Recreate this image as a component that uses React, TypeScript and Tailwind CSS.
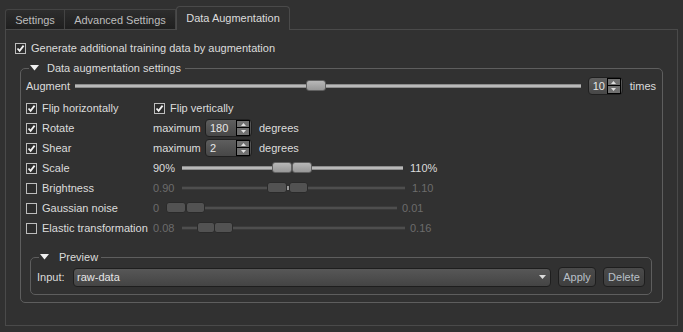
import React from 'react';

const Check: React.FC<{ on?: boolean }> = ({ on }) => (
    <span className="w-[11px] h-[11px] border border-[#bdbdbd] bg-[#2c2c2c] flex items-center justify-center shrink-0">
        {on && (
            <svg width="9" height="9" viewBox="0 0 9 9">
                <path d="M1.5 4.5 L3.6 6.8 L7.6 1.6" fill="none" stroke="#f2f2f2" strokeWidth="1.8" />
            </svg>
        )}
    </span>
);

const Arrow: React.FC = () => (
    <svg width="9" height="6" viewBox="0 0 9 6" className="shrink-0">
        <polygon points="0,0 9,0 4.5,5.5" fill="#f0f0f0" />
    </svg>
);

const Spin: React.FC<{ value: string; w: string }> = ({ value, w }) => (
    <div className={`${w} h-[18px] rounded-[4px] border border-[#202020] bg-gradient-to-b from-[#5e5e5e] to-[#474747] flex items-center justify-between pl-[4px] pr-[1px]`}>
        <span className="text-[#e6e6e6]">{value}</span>
        <div className="flex flex-col w-[14px]">
            <span className="h-[8px] border border-black bg-[#707070] flex items-center justify-center">
                <svg width="5" height="3" viewBox="0 0 5 3"><polygon points="0,3 5,3 2.5,0" fill="#e0e0e0" /></svg>
            </span>
            <span className="h-[8px] border border-black border-t-0 bg-[#707070] flex items-center justify-center">
                <svg width="5" height="3" viewBox="0 0 5 3"><polygon points="0,0 5,0 2.5,3" fill="#e0e0e0" /></svg>
            </span>
        </div>
    </div>
);

// groove with one or two handles laid over it
const Groove: React.FC<{ w: string; on?: boolean; handles: { left: number; w: number }[]; gap?: number }> = ({ w, on, handles, gap }) => (
    <div className={`relative ${w} h-[4px] ${on ? 'bg-[#b9b9b9] border-y border-[#8c8c8c]' : 'bg-[#4e4e4e] border-y border-[#3a3a3a]'}`}>
        {gap !== undefined && <span className="absolute top-[-1px] h-[4px] w-[3px] bg-[#9a9a9a]" style={{ left: gap }} />}
        {handles.map((h, i) => (
            <span
                key={i}
                className={`absolute top-[-5px] h-[11px] rounded-[3px] border ${on ? 'border-[#606060] bg-gradient-to-b from-[#b8b8b8] to-[#979797]' : 'border-[#2a2a2a] bg-[#525252]'}`}
                style={{ left: h.left, width: h.w }}
            />
        ))}
    </div>
);

export default function App() {
    return (
        <div className="w-[683px] h-[332px] overflow-hidden bg-[#313131] text-[11px] leading-[14px] text-[#dcdcdc] font-['Liberation_Sans',Arial,sans-serif]">
            {/* Tabs */}
            <div className="flex items-end h-[29px] px-[5px]">
                <div className="w-[60px] h-[20px] border border-[#444] border-b-0 rounded-tl-[3px] bg-gradient-to-b from-[#2d2d2d] to-[#1f1f1f] text-[#bdbdbd] flex items-center justify-center">
                    Settings
                </div>
                <div className="w-[111px] h-[20px] border border-l-0 border-[#444] border-b-0 bg-gradient-to-b from-[#2d2d2d] to-[#1f1f1f] text-[#bdbdbd] flex items-center justify-center">
                    Advanced Settings
                </div>
                <div className="w-[114px] h-[24px] -mb-px border border-b-0 border-[#4a4a4a] rounded-t-[4px] bg-[#313131] flex items-center justify-center pb-[2px] relative z-10">
                    Data Augmentation
                </div>
            </div>

            {/* Panel */}
            <div className="mx-[5px] h-[297px] border border-[#4a4a4a]">
                <div className="flex items-center gap-[5px] pl-[9px] mt-[11px] h-[14px]">
                    <Check on />
                    <span>Generate additional training data by augmentation</span>
                </div>

                <fieldset className="mx-[14px] mt-[6px] border border-[#5e5e5e] rounded-[5px] px-[5px] pb-[7px]">
                    <legend className="ml-[3px] px-[1px] flex items-center gap-[8px] leading-[14px]">
                        <Arrow />
                        <span className="pr-[3px]">Data augmentation settings</span>
                    </legend>

                    <div className="flex items-center h-[20px] mt-[1px]">
                        <span className="w-[49px]">Augment</span>
                        <Groove w="flex-1" on handles={[{ left: 231, w: 20 }]} />
                        <div className="ml-[7px]"><Spin value="10" w="w-[35px]" /></div>
                        <span className="ml-[7px] mr-[1px]">times</span>
                    </div>

                    <div className="grid grid-cols-[127px_1fr] auto-rows-[20px] mt-[2px]">
                        <div className="flex items-center gap-[5px]"><Check on /><span>Flip horizontally</span></div>
                        <div className="flex items-center gap-[5px] pl-[1px]"><Check on /><span>Flip vertically</span></div>

                        <div className="flex items-center gap-[5px]"><Check on /><span>Rotate</span></div>
                        <div className="flex items-center">
                            <span className="w-[52px]">maximum</span>
                            <Spin value="180" w="w-[47px]" />
                            <span className="ml-[7px]">degrees</span>
                        </div>

                        <div className="flex items-center gap-[5px]"><Check on /><span>Shear</span></div>
                        <div className="flex items-center">
                            <span className="w-[52px]">maximum</span>
                            <Spin value="2" w="w-[47px]" />
                            <span className="ml-[7px]">degrees</span>
                        </div>

                        <div className="flex items-center gap-[5px]"><Check on /><span>Scale</span></div>
                        <div className="flex items-center">
                            <span className="w-[29px]">90%</span>
                            <Groove w="w-[221px]" on handles={[{ left: 90, w: 20 }, { left: 110, w: 20 }]} />
                            <span className="ml-[7px]">110%</span>
                        </div>

                        <div className="flex items-center gap-[5px]"><Check /><span>Brightness</span></div>
                        <div className="flex items-center text-[#6c6c6c]">
                            <span className="w-[29px]">0.90</span>
                            <Groove w="w-[223px]" handles={[{ left: 85, w: 20 }, { left: 107, w: 19 }]} gap={104} />
                            <span className="ml-[7px]">1.10</span>
                        </div>

                        <div className="flex items-center gap-[5px]"><Check /><span>Gaussian noise</span></div>
                        <div className="flex items-center text-[#6c6c6c]">
                            <span className="w-[13px]">0</span>
                            <Groove w="w-[231px]" handles={[{ left: 0, w: 20 }, { left: 20, w: 19 }]} />
                            <span className="ml-[5px]">0.01</span>
                        </div>

                        <div className="flex items-center gap-[5px]"><Check /><span>Elastic transformation</span></div>
                        <div className="flex items-center text-[#6c6c6c]">
                            <span className="w-[29px]">0.08</span>
                            <Groove w="w-[223px]" handles={[{ left: 15, w: 18 }, { left: 32, w: 19 }]} />
                            <span className="ml-[5px]">0.16</span>
                        </div>
                    </div>

                    <fieldset className="ml-[4px] mr-[5px] mt-[12px] border border-[#5e5e5e] rounded-[5px] pl-[6px] pr-[6px] pb-[7px]">
                        <legend className="ml-[2px] px-[1px] flex items-center gap-[10px] leading-[14px]">
                            <Arrow />
                            <span className="pr-[2px]">Preview</span>
                        </legend>
                        <div className="flex items-center h-[20px] mt-[3px]">
                            <span className="w-[36px]">Input:</span>
                            <div className="flex-1 h-[19px] rounded-[4px] border border-[#1e1e1e] bg-gradient-to-b from-[#575757] to-[#444] flex items-center justify-between pl-[3px] pr-[4px]">
                                <span className="text-[#e6e6e6]">raw-data</span>
                                <svg width="7" height="4" viewBox="0 0 7 4"><polygon points="0,0 7,0 3.5,4" fill="#dcdcdc" /></svg>
                            </div>
                            <button className="ml-[7px] w-[38px] h-[20px] rounded-[4px] border border-[#1e1e1e] bg-gradient-to-b from-[#4b4b4b] to-[#3e3e3e] text-[#b9c0c8]">Apply</button>
                            <button className="ml-[7px] w-[42px] h-[20px] rounded-[4px] border border-[#1e1e1e] bg-gradient-to-b from-[#4b4b4b] to-[#3e3e3e] text-[#b9c0c8]">Delete</button>
                        </div>
                    </fieldset>
                </fieldset>
            </div>
        </div>
    );
}
